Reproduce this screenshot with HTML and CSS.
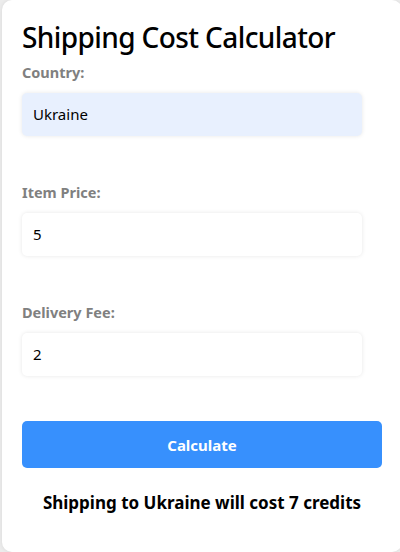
FILE: index.html
```html
<!DOCTYPE html>
<html>
<head>
<meta charset="utf-8">
<link rel="stylesheet" href="styles.css">
</head>
<body>
<div class="card">
  <h1 class="title">Shipping Cost Calculator</h1>
  <div class="field">
    <label class="label">Country:</label>
    <div class="input autofill">Ukraine</div>
  </div>
  <div class="field">
    <label class="label">Item Price:</label>
    <div class="input">5</div>
  </div>
  <div class="field last">
    <label class="label">Delivery Fee:</label>
    <div class="input">2</div>
  </div>
  <button class="btn">Calculate</button>
  <p class="result">Shipping to Ukraine will cost 7 credits</p>
</div>
</body>
</html>
```
FILE: styles.css
```css
html, body {
  margin: 0;
  padding: 0;
  background: #ececec;
  overflow: hidden;
}
body {
  font-family: "Noto Sans", "Open Sans", sans-serif;
  padding: 0 0 0 2px;
  height: 552px;
}
.card {
  box-sizing: border-box;
  background: #fff;
  width: 400px;
  height: 552px;
  border-radius: 10px;
  box-shadow: 0 0 4px rgba(0,0,0,0.08);
  padding: 18px 20px 20px 20px;
  display: flex;
  flex-direction: column;
}
.title {
  margin: 0;
  font-size: 28px;
  font-weight: 500;
  color: #000;
  line-height: 38px;
  letter-spacing: -0.6px;
}
.field {
  display: flex;
  flex-direction: column;
  margin-top: 6px;
  margin-bottom: 46px;
}
.field + .field { margin-top: 0; }
.field.last { margin-bottom: 45px; }
.label {
  font-size: 14.5px;
  font-weight: 700;
  color: #808080;
  line-height: 20px;
  margin-bottom: 11px;
}
.input {
  box-sizing: border-box;
  width: 340px;
  height: 43px;
  border-radius: 5px;
  background: #fff;
  box-shadow: 0 0 4px rgba(0,0,0,0.1);
  padding: 0 11px;
  font-size: 15px;
  line-height: 43px;
  color: #000;
}
.autofill { background: #e8f0fe; }
.btn {
  margin: 0;
  height: 47px;
  width: 360px;
  border: none;
  border-radius: 5px;
  background: #3790fd;
  color: #fff;
  font-family: inherit;
  font-size: 15px;
  font-weight: 700;
}
.result {
  margin: 23px 0 0 0;
  text-align: center;
  font-size: 17px;
  font-weight: 700;
  color: #000;
  width: 360px;
}
```
